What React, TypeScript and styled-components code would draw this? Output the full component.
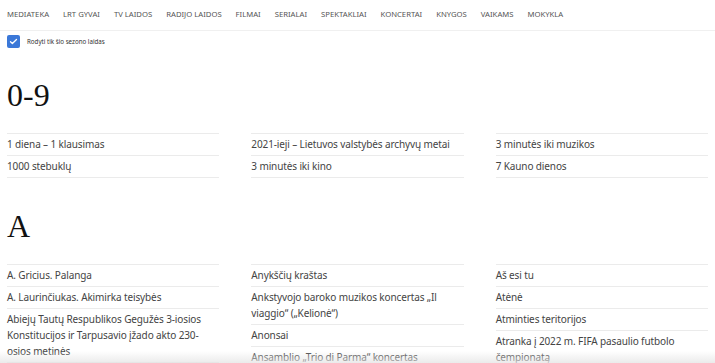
import React from "react";
import styled, { createGlobalStyle } from "styled-components";

const Global = createGlobalStyle`
  html, body { margin: 0; padding: 0; background: #fff; }
  body { font-family: "Noto Sans", "Liberation Sans", sans-serif; overflow: hidden; }
  * { box-sizing: border-box; }
`;

const Page = styled.div`
  width: 715px;
  height: 363px;
  overflow: hidden;
  position: relative;
`;

const Nav = styled.nav`
  height: 31px;
  display: flex;
  align-items: center;
  gap: 14px;
  padding: 0 7px 2px;
  border-bottom: 1px solid #f0f0f0;
`;

const NavItem = styled.a`
  font-size: 7.7px;
  color: #555;
  text-transform: uppercase;
  text-decoration: none;
  white-space: nowrap;
`;

const Filter = styled.label`
  display: flex;
  align-items: center;
  gap: 7px;
  padding: 3px 7px 0;
  height: 17px;
`;

const Box = styled.span`
  width: 13px;
  height: 13px;
  border-radius: 2px;
  background: #3b78d8;
  display: flex;
  align-items: center;
  justify-content: center;
`;

const FilterText = styled.span`
  font-size: 6.2px;
  color: #333;
`;

const Content = styled.main`
  padding: 0 7px;
`;

const Section = styled.section<{ $first?: boolean }>`
  margin-top: ${(p) => (p.$first ? "31px" : "32px")};
`;

const Heading = styled.h2`
  margin: 0 0 22px;
  font-family: "Liberation Serif", "DejaVu Serif", serif;
  font-weight: 400;
  font-size: 32px;
  line-height: 32px;
  color: #111;
`;

const Grid = styled.div`
  display: grid;
  grid-template-columns: repeat(3, 1fr);
  column-gap: 32px;
`;

const List = styled.ul`
  list-style: none;
  margin: 0;
  padding: 0;
  border-top: 1px solid #ebebeb;
`;

const Item = styled.li`
  padding: 2px 0 3px;
  border-bottom: 1px solid #ebebeb;
  font-size: 10px;
  letter-spacing: -0.12px;
  line-height: 16px;
  color: #444;
`;

const Fade = styled.div`
  position: absolute;
  left: 0;
  right: 0;
  bottom: 0;
  height: 12px;
  background: linear-gradient(to bottom, rgba(235,235,235,0), rgba(228,228,228,0.75));
  pointer-events: none;
`;

const navItems = [
  "Mediateka",
  "LRT gyvai",
  "TV laidos",
  "Radijo laidos",
  "Filmai",
  "Serialai",
  "Spektakliai",
  "Koncertai",
  "Knygos",
  "Vaikams",
  "Mokykla",
];

const sections: { title: string; cols: string[][] }[] = [
  {
    title: "0-9",
    cols: [
      ["1 diena – 1 klausimas", "1000 stebuklų"],
      ["2021-ieji – Lietuvos valstybės archyvų metai", "3 minutės iki kino"],
      ["3 minutės iki muzikos", "7 Kauno dienos"],
    ],
  },
  {
    title: "A",
    cols: [
      [
        "A. Gricius. Palanga",
        "A. Laurinčiukas. Akimirka teisybės",
        "Abiejų Tautų Respublikos Gegužės 3-iosios Konstitucijos ir Tarpusavio įžado akto 230-osios metinės",
      ],
      [
        "Anykščių kraštas",
        "Ankstyvojo baroko muzikos koncertas „Il viaggio“ („Kelionė“)",
        "Anonsai",
        "Ansamblio „Trio di Parma“ koncertas",
      ],
      [
        "Aš esi tu",
        "Atėnė",
        "Atminties teritorijos",
        "Atranka į 2022 m. FIFA pasaulio futbolo čempionatą",
      ],
    ],
  },
];

export default function App() {
  return (
    <Page>
      <Global />
      <Nav>
        {navItems.map((n) => (
          <NavItem key={n}>{n}</NavItem>
        ))}
      </Nav>
      <Filter>
        <Box>
          <svg width="9" height="9" viewBox="0 0 24 24" fill="none" stroke="#fff" strokeWidth="3.5" strokeLinecap="round" strokeLinejoin="round">
            <path d="M4 12.5l5 5L20 6.5" />
          </svg>
        </Box>
        <FilterText>Rodyti tik šio sezono laidas</FilterText>
      </Filter>
      <Content>
        {sections.map((s, i) => (
          <Section key={s.title} $first={i === 0}>
            <Heading>{s.title}</Heading>
            <Grid>
              {s.cols.map((c, j) => (
                <List key={j}>
                  {c.map((t) => (
                    <Item key={t}>{t}</Item>
                  ))}
                </List>
              ))}
            </Grid>
          </Section>
        ))}
      </Content>
      <Fade />
    </Page>
  );
}
